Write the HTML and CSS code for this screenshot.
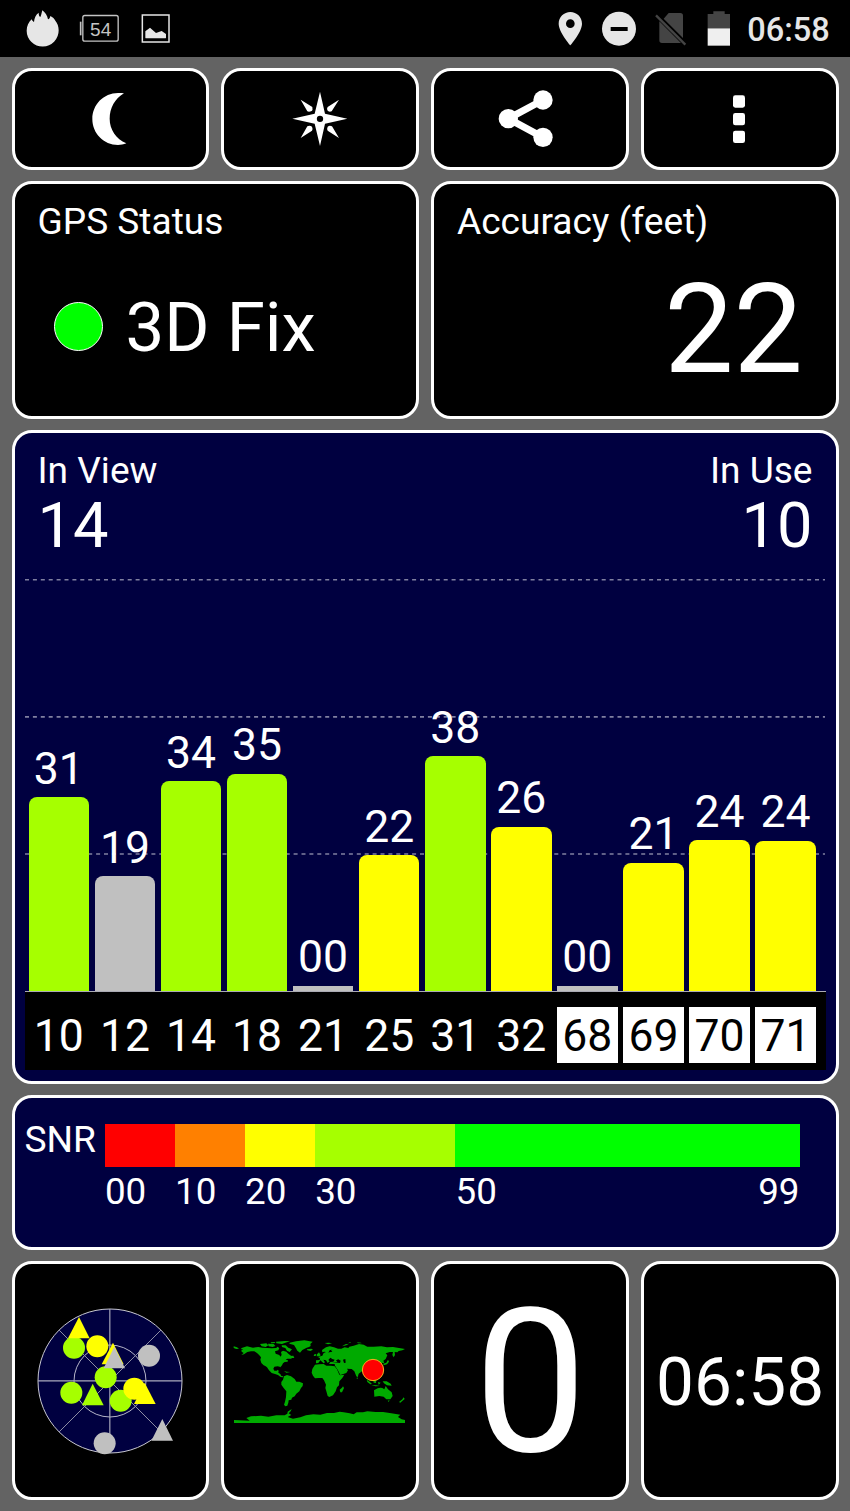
FILE: index.html
```html
<!DOCTYPE html>
<html lang="en">
<head>
<meta charset="utf-8">
<title>GPS Status</title>
<link rel="stylesheet" href="styles.css">
</head>
<body>
<header class="statusbar">
  <svg class="status-left" width="180" height="56" viewBox="0 0 540 168">
    <path fill="#e6e6e6" d="M80 92C80 78 86 66 95 58C97 63 99 65 102 66C103 54 107 44 116 38C116 45 118 50 121 51C124 46 125 37 127 31C135 38 142 46 144 58C148 57 150 53 151 48C158 51 164 57 165 61C172 69 176 79 176 91A48 48 0 0 1 80 92Z"/>
    <rect x="248.500" y="46.500" width="106" height="77" rx="6" fill="none" stroke="#c4c4c4" stroke-width="4"/>
    <path d="M242 65V106" stroke="#c4c4c4" stroke-width="5"/>
    <text class="status-level" x="302" y="107" text-anchor="middle">54</text>
    <rect x="427" y="45" width="80" height="81" fill="none" stroke="#e6e6e6" stroke-width="4.500"/>
    <path fill="#e6e6e6" d="M436 113V94L450 83L468 99L485 93L498 102V113Q498 115 495 115H439Q436 115 436 113Z"/>
  </svg>
  <div class="status-right">
    <svg width="185" height="56" viewBox="390 0 555 168">
      <path fill="#e6e6e6" fill-rule="evenodd" d="M436 36C455 36 471 51 471 71C471 96 436 136 436 136C436 136 401 96 401 71C401 51 417 36 436 36ZM436 58A13 13 0 1 0 436 84A13 13 0 1 0 436 58Z"/>
      <circle cx="582" cy="86" r="51" fill="#e6e6e6"/>
      <path d="M557 87H608" stroke="#000" stroke-width="12"/>
      <path fill="#444" d="M731 39H766Q774 39 774 47V114L716 56ZM703 64L768 129H711Q703 129 703 121Z"/>
      <path d="M693 46L781 134" stroke="#444" stroke-width="7"/>
      <path fill="#444" d="M848 42H865V34H899V42H915V85H848Z"/>
      <path fill="#efefef" d="M848 85H915V137H848Z"/>
    </svg>
    <span class="status-time">06:58</span>
  </div>
</header>
<main class="board">
  <section class="row">
    <button class="card tool"><svg width="60" height="60" viewBox="240 267 180 180"><path fill="#fff" d="M372 280C344 296 329 325 329 356C329 388 348 417 379 430C371 434 362 435 354 435C311 435 277 400 277 357C277 314 311 279 354 279C361 279 367 279 372 280Z"/></svg></button>
    <button class="card tool"><svg width="60" height="60" viewBox="869 267 180 180"><path fill="#fff" fill-rule="evenodd" d="M959 275L974 341L1041 356L974 371L959 438L943 371L876 356L943 341ZM959 347A9.500 9.500 0 1 0 959 366A9.500 9.500 0 1 0 959 347Z"/><path fill="#fff" d="M901 299L936 321Q938 330 934 333Q926 337 921 334ZM1016 299L994 334Q985 337 981 331Q979 325 982 321ZM901 414L921 379Q928 375 935 380Q938 386 935 392ZM1016 414L982 392Q979 386 982 380Q988 375 995 379Z"/></svg></button>
    <button class="card tool share"><svg width="60" height="60" viewBox="210 267 180 180"><path d="M354 300L250 356L354 412" fill="none" stroke="#fff" stroke-width="21"/><circle cx="354" cy="300" r="29" fill="#fff"/><circle cx="250" cy="356" r="29" fill="#fff"/><circle cx="354" cy="412" r="29" fill="#fff"/></svg></button>
    <button class="card tool"><svg width="60" height="60" viewBox="852 267 180 180" fill="#fff"><rect x="924" y="286" width="36" height="37" rx="7"/><rect x="924" y="339" width="36" height="37" rx="7"/><rect x="924" y="392" width="36" height="37" rx="7"/></svg></button>
  </section>

  <section class="row halves">
    <div class="card info">
      <div class="title">GPS Status</div>
      <div class="fix"><span class="led"></span><span>3D Fix</span></div>
    </div>
    <div class="card info">
      <div class="title">Accuracy (feet)</div>
      <div class="accuracy">22</div>
    </div>
  </section>

  <section class="card chart">
    <div class="counts">
      <div><div class="title">In View</div><div class="count">14</div></div>
      <div class="in-use"><div class="title">In Use</div><div class="count">10</div></div>
    </div>
    <div class="plot">
      <svg class="gridlines" width="802" height="412" viewBox="0 0 802 412"><path d="M0 .8H800M0 137.900H800M0 275H800" stroke="#8080a0" stroke-width="1.600" stroke-dasharray="4 3.900"/></svg>
      <div class="col"><span>31</span><i class="bar lime" style="height:194px"></i></div>
      <div class="col"><span>19</span><i class="bar gray" style="height:115px"></i></div>
      <div class="col"><span>34</span><i class="bar lime" style="height:210px"></i></div>
      <div class="col"><span>35</span><i class="bar lime" style="height:217.500px"></i></div>
      <div class="col"><span>00</span><i class="bar gray flat" style="height:5.700px"></i></div>
      <div class="col"><span>22</span><i class="bar yellow" style="height:136.300px"></i></div>
      <div class="col"><span>38</span><i class="bar lime" style="height:235px"></i></div>
      <div class="col"><span>26</span><i class="bar yellow" style="height:164.700px"></i></div>
      <div class="col"><span>00</span><i class="bar gray flat" style="height:5.700px"></i></div>
      <div class="col"><span>21</span><i class="bar yellow" style="height:128.700px"></i></div>
      <div class="col"><span>24</span><i class="bar yellow" style="height:151.300px"></i></div>
      <div class="col"><span>24</span><i class="bar yellow" style="height:150.700px"></i></div>
    </div>
    <div class="axis">
      <span>10</span><span>12</span><span>14</span><span>18</span><span>21</span><span>25</span><span>31</span><span>32</span><span class="alt">68</span><span class="alt">69</span><span class="alt">70</span><span class="alt">71</span>
    </div>
  </section>

  <section class="card snr">
    <div class="snr-label">SNR</div>
    <div class="scale">
      <div class="step"><i class="swatch red"></i><span>00</span></div>
      <div class="step"><i class="swatch orange"></i><span>10</span></div>
      <div class="step"><i class="swatch yellow"></i><span>20</span></div>
      <div class="step"><i class="swatch lime"></i><span>30</span></div>
      <div class="step"><i class="swatch green"></i><div class="ends"><span>50</span><span>99</span></div></div>
    </div>
  </section>

  <section class="row">
    <div class="card tile sky">
      <svg width="160" height="160" viewBox="61 122 480 480">
        <circle cx="301" cy="362" r="216" fill="#000040" stroke="#c8c8d2" stroke-width="3"/>
        <circle cx="301" cy="362" r="108" fill="none" stroke="#b4b4c8" stroke-width="3"/>
        <path d="M85 361.500H517M300.500 146V578" stroke="#aaaabc" stroke-width="3.500"/>
        <path d="M148 209L454 515M454 209L148 515" stroke="#8c8ca4" stroke-width="3"/>
        <g fill="#a6ff00"><circle cx="193" cy="262" r="33"/><circle cx="288" cy="351" r="33"/><circle cx="185" cy="397" r="33"/><circle cx="333" cy="421" r="33"/><path d="M249 370L282 435H217Z"/></g>
        <g fill="#ff0"><path d="M208 170L240 234H175Z"/><circle cx="263" cy="258" r="33"/><path d="M310 247L342 312H276Z"/><circle cx="374" cy="385" r="33"/><path d="M405 367L438 431H373Z"/></g>
        <g fill="#c0c0c0"><path d="M314 259L346 324H282Z"/><circle cx="418" cy="286" r="33"/><circle cx="285" cy="549" r="33"/><path d="M458 476L490 541H425Z"/></g>
      </svg>
    </div>
    <div class="card tile">
      <svg width="190" height="120" viewBox="0 0 570 360">
        <g fill="#00aa00">
          <path d="M50 84L66 79L84 83L100 81L112 83L127 84L140 85L154 84L157 80L163 84L160 91L150 94L152 101L163 105L166 110L170 105L168 96L174 92L184 95L190 101L196 106L202 111L199 116L187 116L182 119L189 121L188 125L179 126L174 130L171 136L166 142L164 140L158 139L148 140L145 146L148 152L155 152L159 149L161 153L160 158L166 162L169 168L175 169L174 172L167 171L159 165L150 162L140 159L132 151L126 142L121 138L116 136L109 129L106 119L108 112L103 106L96 99L88 94L78 94L67 96L57 103L49 105L56 99L50 95L49 91L55 89L48 87Z"/>
          <path d="M26 79L36 82L42 86L34 87L26 84ZM105 72L124 70L130 76L122 81L110 79ZM129 71L146 72L151 78L143 81L131 79ZM153 65L180 63L195 64L181 68L171 72L154 70ZM137 67L149 66L151 69L139 70ZM170 76L182 76L190 83L201 88L194 96L186 92L181 84L171 81ZM194 108L205 107L208 114L199 114ZM194 68L213 64L238 61L263 65L256 72L257 78L252 81L245 83L232 90L225 98L217 92L213 85L207 75L193 71Z"/>
          <path d="M177 169L186 165L198 169L209 177L214 185L223 185L234 190L233 198L228 204L223 214L214 221L209 229L201 233L199 239L191 241L190 248L187 257L181 259L177 254L180 245L183 231L184 214L176 204L169 194L169 186L174 179ZM177 153L185 155L196 156L184 158ZM245 88L259 86L264 89L256 93L247 91ZM188 275L200 267L197 274L191 280L199 285L188 291L204 296L226 292L243 286L265 283L286 284L306 279L327 279L344 275L356 277L374 280L386 283L395 277L414 277L427 274L452 276L474 276L499 280L526 284L519 291L530 298L540 300V309H27V300L74 302L64 294L78 289L108 287L130 290L154 286L179 286L187 281Z"/>
          <path d="M270 134L282 133L296 132L304 137L317 137L329 139L336 148L342 162L345 166L358 164L352 174L343 184L342 196L336 202L332 214L324 226L313 231L308 228L304 214L301 204L303 194L297 181L292 174L281 174L270 175L264 167L260 158L262 147ZM354 199L357 204L351 217L346 217L344 209L351 203Z"/>
          <path fill-rule="evenodd" d="M273 130L273 121L284 120L285 115L279 111L292 107L296 99L303 96L298 95L292 97L291 90L303 82L314 79L327 82L339 86L349 86L359 82L370 84L373 80L386 77L402 72L416 74L427 80L446 80L469 79L486 82L504 81L522 84L540 87L532 91L521 93L517 97L509 96L510 105L506 112L502 105L504 96L494 96L482 100L487 106L482 117L475 122L478 130L470 128L468 138L460 148L449 150L444 148L437 154L443 165L438 171L431 160L428 166L435 177L439 184L430 178L423 167L420 158L412 153L401 161L398 172L394 169L388 154L380 147L366 146L369 151L364 159L346 165L338 149L330 137L329 132L312 132L316 126L325 125L329 119L322 117L316 113L310 120L314 124L308 129L303 121L295 119L300 127L296 130L286 121L280 129ZM313 97L322 95L318 90L325 87L314 91L310 98ZM321 126L337 126L333 121L340 118L347 122L345 129ZM354 119L361 117L362 128L357 129Z"/>
          <path d="M276 103L282 97L287 106L283 109L275 109ZM268 103L274 102L272 108L266 108ZM299 69L312 68L321 70L309 73ZM351 79L361 73L372 71L364 76ZM396 67L408 68L410 70L399 70ZM370 67L379 67L375 69ZM475 131L484 128L489 119L492 125L486 133L476 136ZM425 179L434 185L441 192L436 193L427 186ZM445 181L454 177L453 189L446 188ZM459 186L467 188L461 194ZM439 195L454 196L465 198L451 199ZM473 184L485 184L497 191L500 197L486 196L477 190ZM447 211L458 205L466 203L472 204L478 208L482 198L489 208L500 217L503 228L496 238L484 238L476 230L463 228L448 230ZM488 242L494 241L491 246ZM536 232L539 237L531 244L526 248L522 246L532 238ZM396 171L399 176L395 176ZM453 162L457 159L462 169L459 174Z"/>
        </g>
        <circle cx="444" cy="150" r="32" fill="#f00" stroke="#f5b51e" stroke-width="3"/>
      </svg>
    </div>
    <div class="card tile speed">0</div>
    <div class="card tile clock">06:58</div>
  </section>
</main>
</body>
</html>
```
FILE: styles.css
```css
* { box-sizing: border-box; }
body {
  margin: 0;
  width: 850px;
  height: 1511px;
  overflow: hidden;
  background: #636363;
  color: #fff;
  font-family: Roboto, "Liberation Sans", sans-serif;
}
svg { display: block; }
i { display: block; }

.statusbar {
  height: 56.5px;
  background: #000;
  display: flex;
  justify-content: space-between;
}
.status-level { font: 57px "Liberation Sans", sans-serif; fill: #c4c4c4; }
.status-right { display: flex; padding-right: 18.8px; }
.status-time {
  font-size: 32.5px;
  font-weight: 500;
  line-height: 60px;
  color: #e6e6e6;
  width: 84px;
  margin-left: 7.2px;
  white-space: nowrap;
}

.board {
  padding: 11.5px 11.5px 0 11.5px;
  display: grid;
  grid-template-rows: 102px 237.5px 654px 155px 239px;
  gap: 11px;
}
.row { display: grid; grid-template-columns: repeat(4, 1fr); column-gap: 12px; }
.halves { grid-template-columns: repeat(2, 1fr); }
.card {
  background: #000;
  border: 3px solid #fff;
  border-radius: 20px;
  min-width: 0;
}
.tool { display: flex; align-items: center; justify-content: center; padding: 0 1px 0 0; color: #fff; }
.share { padding-right: 9px; }

.title { font-size: 37.1px; line-height: 44px; white-space: nowrap; }
.info { padding: 16px 32.5px 0 23px; }
.fix {
  display: flex;
  align-items: center;
  gap: 23px;
  margin-top: 44px;
  padding-left: 16px;
  font-size: 69px;
  line-height: 80px;
}
.led {
  width: 49px;
  height: 49px;
  margin-bottom: 3px;
  border: 1.5px solid #fff;
  border-radius: 50%;
  background: #0f0;
}
.accuracy { margin-top: 15.5px; font-size: 123.5px; line-height: 140px; text-align: right; }

.chart { background: #000040; padding: 16.4px 10px 0; }
.counts { display: flex; justify-content: space-between; height: 130.6px; padding: 0 13px; }
.in-use { text-align: right; }
.count { margin-top: 2.5px; font-size: 63.2px; line-height: 60px; }
.plot {
  position: relative;
  display: flex;
  align-items: flex-end;
  gap: 5.4px;
  height: 412px;
  padding: 0 9.7px 0 4px;
}
.gridlines { position: absolute; left: 0; top: 0; }
.col { position: relative; flex: 1; text-align: center; font-size: 44.5px; line-height: 44px; }
.col span { display: block; margin-bottom: 6.5px; }
.bar { border-radius: 8px 8px 0 0; }
.flat { border-radius: 0; }
.axis {
  display: flex;
  gap: 5.4px;
  height: 79px;
  padding: 14.2px 9.7px 7.8px 4px;
  border-top: 1px solid #aaaab4;
  background: #000;
  font-size: 44.5px;
  line-height: 52px;
  text-align: center;
}
.axis span { flex: 1; padding-top: 3.5px; }
.axis .alt { background: #fff; color: #000; }

.snr { display: flex; background: #000040; padding: 0 36px 0 10px; font-size: 36.8px; line-height: 44px; }
.snr-label { width: 80.4px; padding-top: 19.7px; font-size: 37.2px; }
.scale {
  flex: 1;
  display: grid;
  grid-template-columns: 70.1px 70.1px 70.1px 140.3px 1fr;
  padding-top: 26.8px;
}
.swatch { height: 42.5px; margin-bottom: 3px; }
.ends { display: flex; justify-content: space-between; }

.red { background: #f00; }
.orange { background: #ff8000; }
.yellow { background: #ff0; }
.lime { background: #a6ff00; }
.green { background: #0f0; }
.gray { background: #c0c0c0; }

.tile { display: flex; align-items: center; justify-content: center; overflow: hidden; }
.sky { padding-top: 1px; }
.speed { font-size: 201px; line-height: 226px; padding: 6px 0 0 1px; }
.clock { font-size: 67.5px; line-height: 80px; padding: 3px 1px 0 2px; }
```
